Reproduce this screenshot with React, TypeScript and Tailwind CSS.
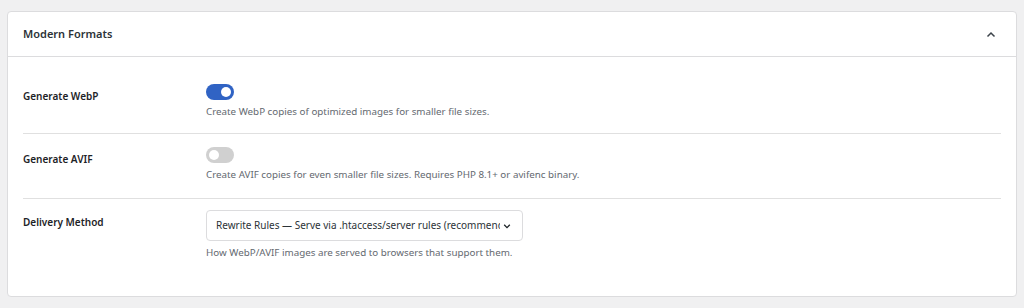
import React from "react";

function Toggle({ on }: { on: boolean }) {
  return (
    <div
      className={
        "relative h-[16px] w-[28px] rounded-full " +
        (on ? "bg-[#3063c4]" : "bg-[#d0d0d0]")
      }
    >
      <div
        className={
          "absolute top-[3px] h-[10px] w-[10px] rounded-full bg-white " +
          (on ? "left-[15px]" : "left-[3px]")
        }
      />
    </div>
  );
}

export default function App() {
  return (
    <div
      className="h-[308px] overflow-hidden bg-[#f0f0f1] px-[7px] pt-[11px] text-[#1d2327]"
      style={{ fontFamily: '"Noto Sans", "Open Sans", sans-serif' }}
    >
      <div className="rounded-[4px] border border-[#dcdcde] bg-white">
        <div className="flex h-[45px] items-center justify-between border-b border-[#dcdcde] px-[15px] pt-[1px]">
          <div className="text-[11px] font-semibold text-[#2c3338]">Modern Formats</div>
          <svg width="10" height="10" viewBox="0 0 10 10" className="mr-[5px]">
            <path d="M1.5 6.5 L5 3 L8.5 6.5" fill="none" stroke="#3c434a" strokeWidth="1.5" />
          </svg>
        </div>
        <div className="px-[15px] pt-[13px] pb-[36px]">
          <div className="flex border-b border-[#e0e0e0] pt-[14px] pb-[14px]">
            <div className="w-[183px] pt-[5px] text-[10px] leading-[15px] font-semibold text-[#1d2327]">
              Generate WebP
            </div>
            <div className="flex flex-col gap-[4px]">
              <Toggle on />
              <div className="text-[9.8px] leading-[15px] text-[#646970]">
                Create WebP copies of optimized images for smaller file sizes.
              </div>
            </div>
          </div>
          <div className="flex border-b border-[#e0e0e0] pt-[13px] pb-[16px]">
            <div className="w-[183px] pt-[5px] text-[10px] leading-[15px] font-semibold text-[#1d2327]">
              Generate AVIF
            </div>
            <div className="flex flex-col gap-[4px]">
              <Toggle on={false} />
              <div className="text-[9.8px] leading-[15px] text-[#646970]">
                Create AVIF copies for even smaller file sizes. Requires PHP 8.1+ or avifenc binary.
              </div>
            </div>
          </div>
          <div className="flex pt-[11px]">
            <div className="w-[183px] pt-[5px] text-[10px] leading-[15px] font-semibold text-[#1d2327]">
              Delivery Method
            </div>
            <div className="flex flex-col gap-[4px]">
              <div className="flex h-[31px] w-[317px] items-center justify-between rounded-[4px] border border-[#dcdcde] bg-white pl-[9px] pr-[11px]">
                <div className="w-[284px] overflow-hidden whitespace-nowrap text-[10px] text-[#2c3338]">
                  Rewrite Rules — Serve via .htaccess/server rules (recommended)
                </div>
                <svg width="8" height="8" viewBox="0 0 10 10">
                  <path d="M1.5 3.5 L5 7 L8.5 3.5" fill="none" stroke="#1d2327" strokeWidth="1.6" />
                </svg>
              </div>
              <div className="text-[9.8px] leading-[15px] text-[#646970]">
                How WebP/AVIF images are served to browsers that support them.
              </div>
            </div>
          </div>
        </div>
      </div>
    </div>
  );
}
